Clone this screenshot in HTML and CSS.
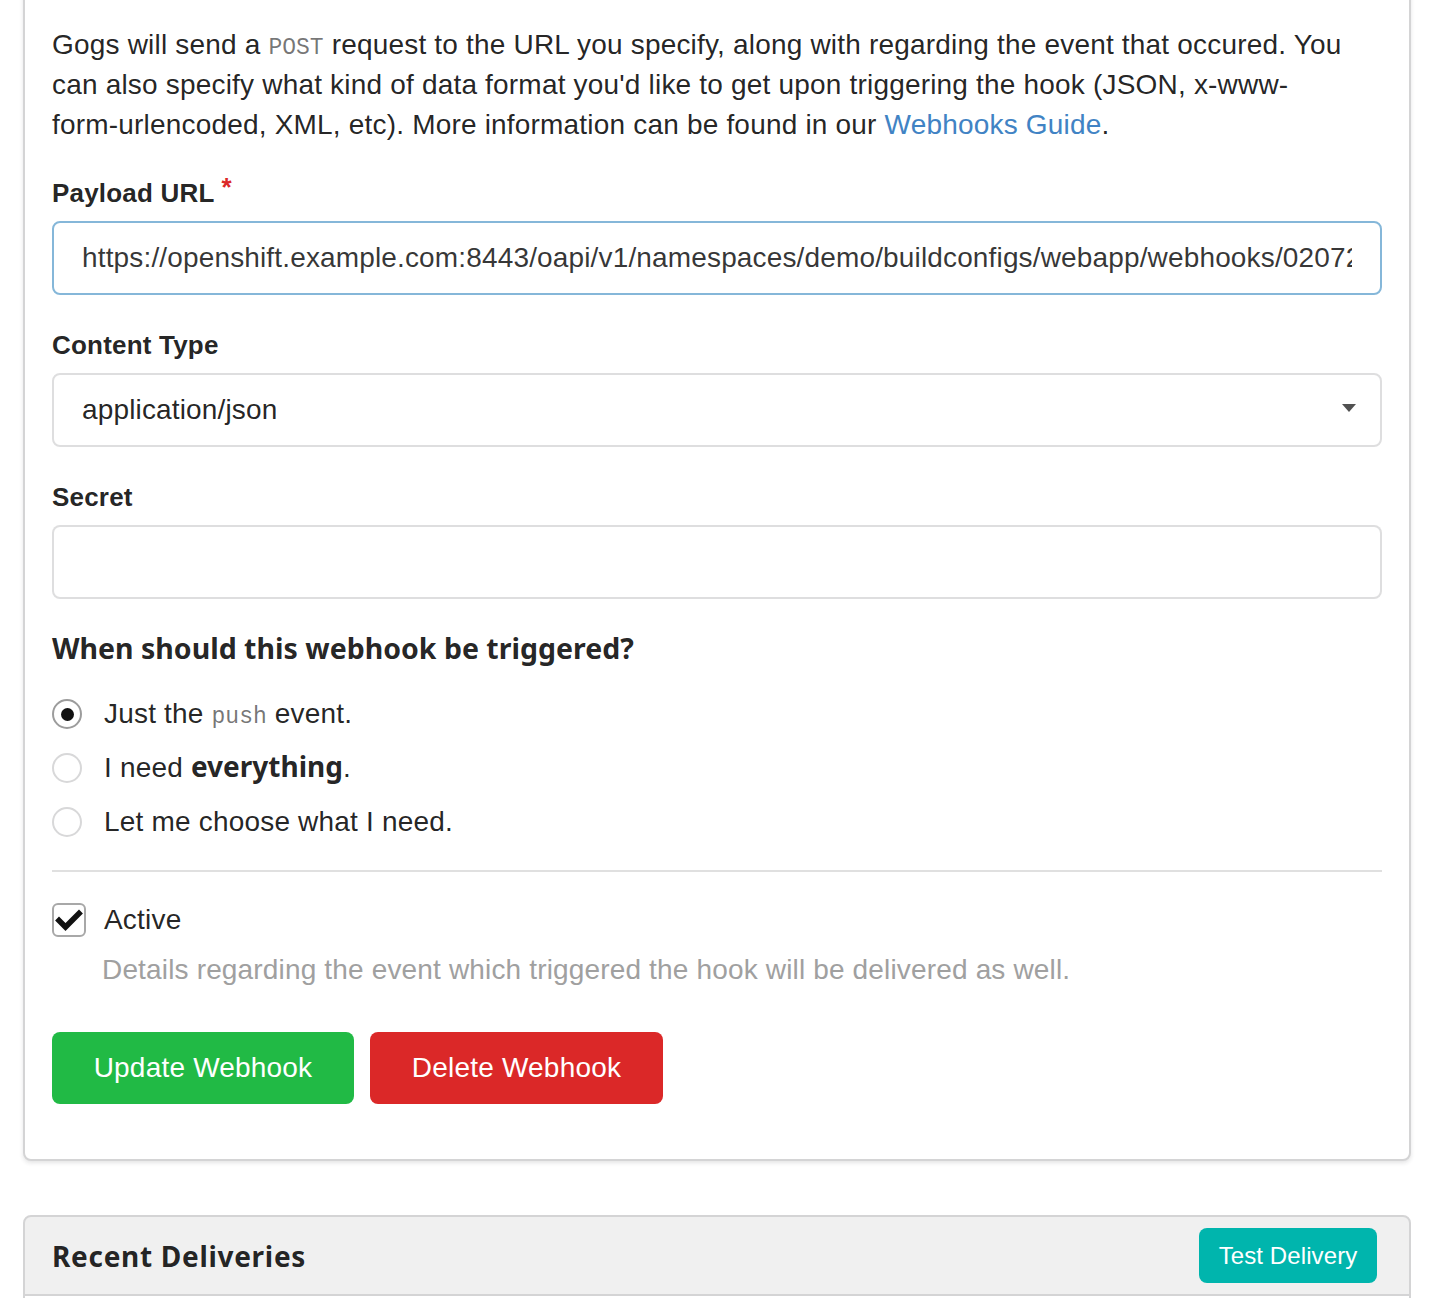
FILE: index.html
```html
<!DOCTYPE html>
<html lang="en">
<head>
<meta charset="utf-8">
<title>Webhook settings</title>
<link rel="stylesheet" href="styles.css">
</head>
<body>
<div class="page">
  <div class="card">
    <p class="intro">Gogs will send a <code>POST</code> request to the URL you specify, along with regarding the event that occured. You can also specify what kind of data format you'd like to get upon triggering the hook (JSON, x-www-<span class="nowrap">form-urlencoded,</span> XML, etc). More information can be found in our <a href="#">Webhooks Guide</a>.</p>

    <div class="field required">
      <label class="field-label">Payload URL</label>
      <input class="text-input focused" type="text" value="https://openshift.example.com:8443/oapi/v1/namespaces/demo/buildconfigs/webapp/webhooks/0207297e3a54c6e0fd11a3dab1c5ab2c/generic">
    </div>

    <div class="field">
      <label class="field-label">Content Type</label>
      <div class="dropdown">
        <span class="dropdown-text">application/json</span>
        <svg class="caret" width="14" height="8" viewBox="0 0 14 8"><path d="M0 0 H14 L7 8 Z" fill="#333"/></svg>
      </div>
    </div>

    <div class="field">
      <label class="field-label">Secret</label>
      <input class="text-input" type="text" value="">
    </div>

    <h4 class="section-title">When should this webhook be triggered?</h4>

    <div class="choices">
      <div class="choice">
        <span class="radio checked"><span class="dot"></span></span>
        <span class="choice-text">Just the <code>push</code> event.</span>
      </div>
      <div class="choice">
        <span class="radio"></span>
        <span class="choice-text">I need <strong>everything</strong>.</span>
      </div>
      <div class="choice">
        <span class="radio"></span>
        <span class="choice-text">Let me choose what I need.</span>
      </div>
    </div>

    <div class="divider"></div>

    <div class="choice check-row">
      <span class="checkbox">
        <svg width="30" height="30" viewBox="0 0 30 30"><path d="M5 15.5 L11.5 22 L25 8.5" fill="none" stroke="#111" stroke-width="5.5" stroke-linecap="square" stroke-linejoin="miter"/></svg>
      </span>
      <span class="choice-text">Active</span>
    </div>
    <p class="help">Details regarding the event which triggered the hook will be delivered as well.</p>

    <div class="buttons">
      <button class="btn green">Update Webhook</button>
      <button class="btn red">Delete Webhook</button>
    </div>
  </div>

  <div class="deliveries-header">
    <h4 class="deliveries-title">Recent Deliveries</h4>
    <button class="btn teal small">Test Delivery</button>
  </div>
  <div class="deliveries-body"></div>
</div>
</body>
</html>
```

FILE: styles.css
```css
html, body {
  margin: 0;
  padding: 0;
  background: #ffffff;
}

body {
  font-family: "Liberation Sans", Arial, sans-serif;
  font-size: 28px;
  color: rgba(0, 0, 0, 0.87);
  overflow: hidden;
}

.page {
  padding: 0 25px 0 23px;
}

.card {
  margin-top: -40px;
  border: 2px solid #d4d4d5;
  border-radius: 8px;
  box-shadow: 0 2px 4px 0 rgba(34, 36, 38, 0.12);
  padding: 63px 27px 55px 27px;
  background: #fff;
}

.intro {
  margin: 0 0 30px 0;
  line-height: 40px;
  letter-spacing: 0.19px;
}

.nowrap {
  white-space: nowrap;
}

code {
  font-family: "Liberation Mono", "Courier New", monospace;
  font-size: 23px;
  line-height: 1;
  letter-spacing: 0;
  color: rgba(0, 0, 0, 0.55);
}

a {
  color: #4183c4;
  text-decoration: none;
}

.field {
  margin-bottom: 32px;
}

.field-label {
  display: block;
  font-weight: 700;
  font-size: 26px;
  line-height: 37px;
  margin-bottom: 9px;
  letter-spacing: 0.2px;
}

.required .field-label::after {
  content: "*";
  color: #db2828;
  margin-left: 7px;
  position: relative;
  top: -6px;
  line-height: 1;
}

.text-input {
  display: block;
  box-sizing: border-box;
  width: 100%;
  height: 74px;
  margin: 0;
  padding: 0 28px;
  border: 2px solid rgba(34, 36, 38, 0.15);
  border-radius: 8px;
  font-family: "Liberation Sans", Arial, sans-serif;
  font-size: 28px;
  letter-spacing: 0.15px;
  color: rgba(0, 0, 0, 0.87);
  background: #fff;
  outline: none;
}

.text-input.focused {
  border-color: #85b7d9;
  color: rgba(0, 0, 0, 0.8);
}

.dropdown {
  box-sizing: border-box;
  height: 74px;
  border: 2px solid rgba(34, 36, 38, 0.15);
  border-radius: 8px;
  padding: 0 24px 0 28px;
  display: flex;
  align-items: center;
  justify-content: space-between;
}

.dropdown-text {
  letter-spacing: 0.15px;
}

.caret {
  opacity: 0.85;
  margin-top: -4px;
}

.section-title {
  font-family: "Noto Sans", "Open Sans", sans-serif;
  font-weight: 700;
  font-size: 28.5px;
  line-height: 34px;
  margin: 0 0 22px 0;
  color: rgba(0, 0, 0, 0.87);
}

.choices {
  display: flex;
  flex-direction: column;
}

.choice {
  display: flex;
  align-items: center;
  height: 54px;
  gap: 22px;
}

.check-row {
  gap: 18px;
}

.choice-text {
  line-height: 40px;
  letter-spacing: 0.19px;
}

.choice-text strong {
  font-family: "Noto Sans", "Open Sans", sans-serif;
  font-weight: 700;
  line-height: 1;
  letter-spacing: 0;
}

.radio {
  box-sizing: border-box;
  width: 30px;
  height: 30px;
  border-radius: 50%;
  border: 2px solid #d8d8d9;
  display: flex;
  align-items: center;
  justify-content: center;
  flex: none;
}

.radio.checked {
  border-color: #9c9c9c;
}

.dot {
  width: 13px;
  height: 13px;
  border-radius: 50%;
  background: #111;
}

.divider {
  margin: 21px 0;
  border-top: 2px solid #e0e0e0;
}

.checkbox {
  box-sizing: border-box;
  width: 34px;
  height: 34px;
  border: 2px solid #a8a8a8;
  border-radius: 6px;
  display: flex;
  align-items: center;
  justify-content: center;
  flex: none;
}

.help {
  margin: 3px 0 0 50px;
  line-height: 40px;
  letter-spacing: 0.16px;
  color: #a0a0a0;
}

.buttons {
  display: flex;
  gap: 16px;
  margin-top: 42px;
}

.btn {
  box-sizing: border-box;
  height: 72px;
  padding: 0 20px;
  border: none;
  border-radius: 8px;
  font-family: "Liberation Sans", Arial, sans-serif;
  font-size: 28px;
  letter-spacing: 0.2px;
  color: #fff;
  cursor: pointer;
}

.btn.green {
  background: #21ba45;
  width: 302px;
}

.btn.red {
  background: #db2828;
  width: 293px;
}

.btn.teal {
  background: #00b5ad;
}

.btn.small {
  height: 55px;
  padding: 0 10px;
  font-size: 24px;
  letter-spacing: 0.1px;
  width: 178px;
}

.deliveries-header {
  margin-top: 54px;
  box-sizing: border-box;
  height: 81px;
  border: 2px solid #d4d4d5;
  border-radius: 8px 8px 0 0;
  background: #f0f0f0;
  display: flex;
  align-items: center;
  justify-content: space-between;
  padding: 0 32px 0 27px;
}

.deliveries-title {
  margin: 0;
  font-family: "Noto Sans", "Open Sans", sans-serif;
  font-weight: 700;
  font-size: 28px;
  letter-spacing: 0.7px;
  line-height: 34px;
  color: rgba(0, 0, 0, 0.87);
}

.deliveries-body {
  height: 40px;
  border-left: 2px solid #d4d4d5;
  border-right: 2px solid #d4d4d5;
}
```
